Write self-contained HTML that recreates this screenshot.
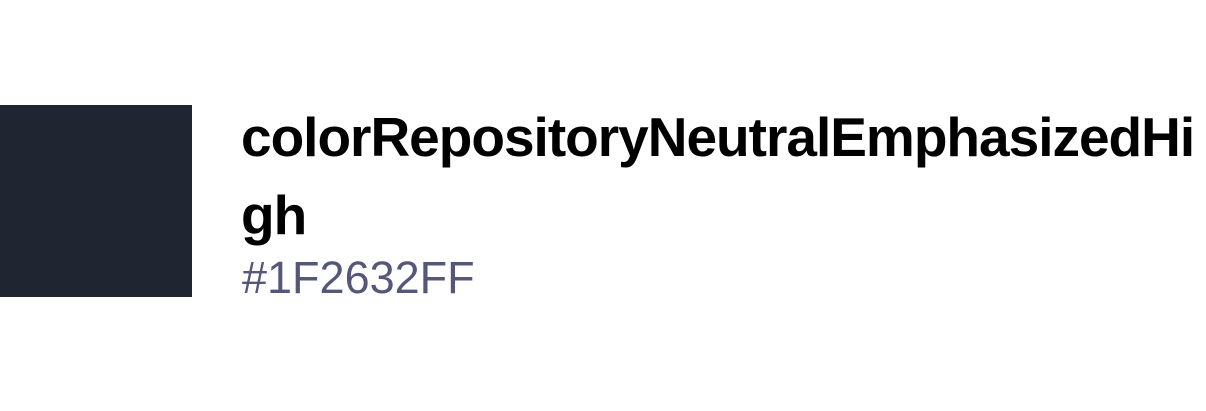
<!DOCTYPE html>
<html><head><meta charset="utf-8"><style>
html,body{margin:0;padding:0;background:#fff;width:1206px;height:411px;overflow:hidden}
.sq{position:absolute;left:0;top:105px;width:192px;height:192px;background:#1F2632}
.t{position:absolute;left:241px;font-family:"Liberation Sans",sans-serif;font-weight:bold;color:#000;white-space:nowrap;font-size:55px;line-height:55px;letter-spacing:-1px}
.h{position:absolute;left:242px;top:255px;font-family:"Liberation Sans",sans-serif;color:#55577a;font-size:45px;line-height:45px;white-space:nowrap}
</style></head><body>
<div class="sq"></div>
<div class="t" style="top:110px">colorRepositoryNeutralEmphasizedHi</div>
<div class="t" style="top:188px">gh</div>
<div class="h">#1F2632FF</div>
</body></html>
